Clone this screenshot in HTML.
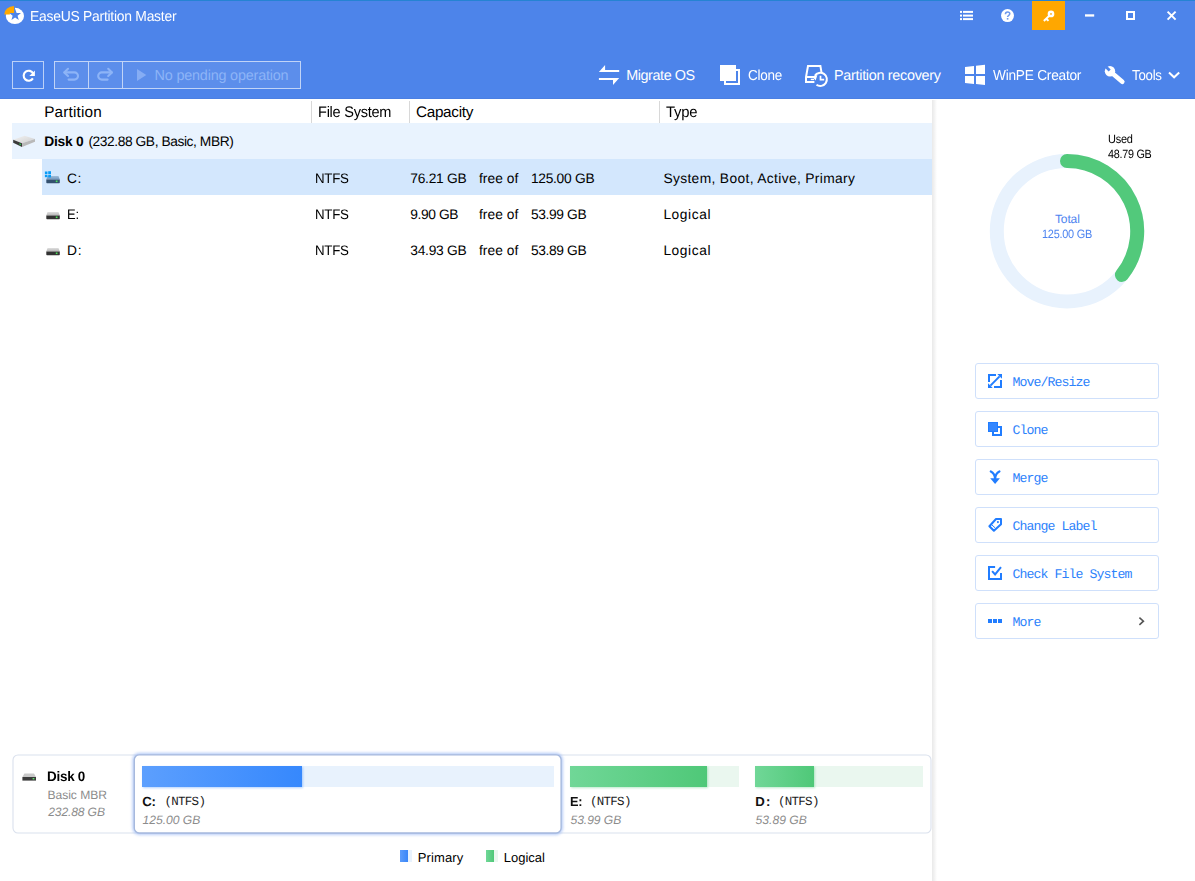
<!DOCTYPE html>
<html lang="en"><head><meta charset="utf-8"><title>EaseUS Partition Master</title>
<style>
*{box-sizing:border-box;margin:0;padding:0}
html,body{width:1195px;height:881px;overflow:hidden;background:#fff}
body{position:relative;font-family:"Liberation Sans",sans-serif;color:#000;text-rendering:geometricPrecision}
.abs,.t,svg{position:absolute}
.t{white-space:pre;display:block}
.m{font-family:"Liberation Mono",monospace}
#titlebar{left:0;top:0;width:1195px;height:99px;background:#4d84ea}
#topline{left:0;top:0;width:1195px;height:1px;background:#2583d3}
#hdrshade{left:0;top:98px;width:1195px;height:1px;background:#4a7fe3}
.tbtn{border:1px solid rgba(255,255,255,.62)}
#grp{background:rgba(255,255,255,.085)}
.sep{width:1px;background:rgba(255,255,255,.62)}
.colsep{width:1px;top:101px;height:22px;background:#d8d8d8}
.row{height:36px}
.abtn{left:975px;width:184px;height:36px;border:1px solid #cfe0fb;border-radius:3px;background:#fff}
</style></head>
<body>
<div id="titlebar" class="abs"></div><div id="topline" class="abs"></div><div id="hdrshade" class="abs"></div>
<svg id="logo" style="left:3px;top:4px" width="24" height="23" viewBox="3 4 24 23">
<ellipse cx="14.9" cy="15.9" rx="9.1" ry="8.1" fill="#fff"/>
<path d="M15.10 8.80 L16.63 12.90 L21.00 13.08 L17.57 15.80 L18.74 20.02 L15.10 17.60 L11.46 20.02 L12.63 15.80 L9.20 13.08 L13.57 12.90 Z" fill="#4d84ea"/>
<path d="M13 5 L15 5 L15 13.6 L13 13.6 Z" fill="#4d84ea"/>
<path d="M4.2 14.5 A9.9 8.6 0 0 1 14.1 5.9 L14.1 12.9 L9.9 12.9 L9.9 14.5 Z" fill="#ffa800"/>
</svg>
<span class="t" style="left:29.5px;top:8px;font-size:14.38px;line-height:19px;letter-spacing:-0.259px;transform:scaleX(0.9658);transform-origin:0 50%;color:#fff;">EaseUS Partition Master</span>
<svg style="left:959px;top:10px" width="16" height="12" viewBox="959 10 16 12" fill="#fff">
<rect x="960" y="10.9" width="2" height="2"/><rect x="963" y="10.9" width="10" height="2"/>
<rect x="960" y="14.6" width="2" height="2"/><rect x="963" y="14.6" width="10" height="2"/>
<rect x="960" y="18.1" width="2" height="2"/><rect x="963" y="18.1" width="10" height="2"/>
</svg>
<svg style="left:1000px;top:8px" width="16" height="16" viewBox="1000 8 16 16">
<circle cx="1007.5" cy="15.6" r="6.5" fill="#fff"/>
<path d="M1005.4 14.2 C1005.4 12.6 1006.4 11.9 1007.6 11.9 C1008.9 11.9 1009.8 12.7 1009.8 13.8 C1009.8 15.2 1007.6 15.4 1007.6 17" fill="none" stroke="#6f99ec" stroke-width="1.5"/>
<rect x="1006.8" y="18" width="1.6" height="1.6" fill="#6f99ec"/>
</svg>
<div class="abs" style="left:1032px;top:1px;width:33px;height:29px;background:#ffa700"></div>
<svg style="left:1040px;top:8px" width="16" height="16" viewBox="1040 8 16 16">
<circle cx="1051" cy="13.9" r="2.1" fill="none" stroke="#fff" stroke-width="2.5"/>
<path d="M1049.4 15.6 L1044.6 20.3 M1046.3 18.7 L1047.8 20.2" fill="none" stroke="#fff" stroke-width="2" stroke-linecap="square"/>
</svg>
<svg style="left:1084px;top:12px" width="12" height="6" viewBox="1084 12 12 6"><rect x="1085" y="14.3" width="9.2" height="2.3" fill="#fff"/></svg>
<div class="abs" style="left:1126px;top:11px;width:9px;height:9px;border:2px solid #fff"></div>
<svg style="left:1165px;top:9px" width="13" height="13" viewBox="1165 9 13 13">
<path d="M1167.6 11.6 L1175.6 19.6 M1175.6 11.6 L1167.6 19.6" stroke="#fff" stroke-width="2" fill="none"/>
</svg>
<div class="abs tbtn" style="left:12px;top:61px;width:32px;height:28px"></div>
<svg style="left:20px;top:68px" width="17" height="16" viewBox="20 68 17 16">
<path d="M33.2 73.6 A5 5 0 1 0 32.9 78.4" fill="none" stroke="#fff" stroke-width="2.1"/>
<path d="M34.9 70.4 L34.9 76 L29.3 76 Z" fill="#fff"/>
</svg>
<div id="grp" class="abs tbtn" style="left:54px;top:61px;width:247px;height:28px"></div>
<div class="abs sep" style="left:88px;top:62px;height:26px"></div>
<div class="abs sep" style="left:122px;top:62px;height:26px"></div>
<svg style="left:62px;top:67px" width="18" height="15" viewBox="62 67 18 15" fill="none" stroke="#8db4f7" stroke-width="2.1" stroke-linecap="round" stroke-linejoin="round">
<path d="M68 68.8 L64.2 72.4 L68 76"/><path d="M64.6 72.4 L74.4 72.4 A3.6 3.6 0 0 1 74.4 79.6 L68.6 79.6"/>
</svg>
<svg style="left:96px;top:67px" width="18" height="15" viewBox="96 67 18 15" fill="none" stroke="#8db4f7" stroke-width="2.1" stroke-linecap="round" stroke-linejoin="round">
<path d="M108.2 68.8 L112 72.4 L108.2 76"/><path d="M111.6 72.4 L101.8 72.4 A3.6 3.6 0 0 0 101.8 79.6 L107.6 79.6"/>
</svg>
<svg style="left:136px;top:68px" width="12" height="14" viewBox="136 68 12 14"><path d="M137 69 L146.3 75 L137 81 Z" fill="#86adf4"/></svg>
<span class="t" style="left:154.6px;top:67px;font-size:14.38px;line-height:19px;letter-spacing:-0.183px;color:#8db4f7;">No pending operation</span>
<svg style="left:598px;top:64px" width="22" height="22" viewBox="598 64 22 22" fill="#fff">
<path d="M598.9 72 L605.1 64.9 L605.1 69.9 L619.2 69.9 L619.2 72 Z"/>
<path d="M619.2 78 L613 85 L613 80.1 L598.9 80.1 L598.9 78 Z"/>
</svg>
<span class="t" style="left:626.2px;top:67px;font-size:14.38px;line-height:19px;letter-spacing:-0.411px;color:#fff;">Migrate OS</span>
<svg style="left:719px;top:64px" width="22" height="22" viewBox="719 64 22 22">
<rect x="720" y="65" width="16" height="16" fill="#fff"/>
<path d="M736 70 L739 70 L739 84 L725 84 L725 81" fill="none" stroke="#fff" stroke-width="2"/>
</svg>
<span class="t" style="left:747.7px;top:67px;font-size:14.38px;line-height:19px;letter-spacing:-0.266px;transform:scaleX(0.9398);transform-origin:0 50%;color:#fff;">Clone</span>
<svg style="left:804px;top:64px" width="26" height="24" viewBox="804 64 26 24" fill="none" stroke="#fff" stroke-width="1.8">
<path d="M814.4 82 L806 82 L806 77 L808 66.1 L820.4 66.1 L821.5 72.4" stroke-width="2"/>
<path d="M806 77 L815 77" stroke-width="2"/>
<path d="M810.8 79.4 L814 79.4" stroke-width="1.4"/>
<path d="M814.8 75.7 A6.6 6.6 0 1 1 816.5 84.8" stroke-width="2"/>
<path d="M820.5 75.8 L820.5 79.7 L824.2 79.7" stroke-width="1.7"/>
<path d="M812.6 76.8 L817.4 75 L815.6 80.4 Z" fill="#fff" stroke="none"/>
</svg>
<span class="t" style="left:834.0px;top:67px;font-size:14.38px;line-height:19px;letter-spacing:-0.286px;color:#fff;">Partition recovery</span>
<svg style="left:964px;top:64px" width="22" height="22" viewBox="964 64 22 22" fill="#fff">
<path d="M965 67.1 L974 65.9 L974 74 L965 74 Z"/>
<path d="M976 65.8 L985 64.8 L985 74 L976 74 Z"/>
<path d="M965 76 L974 76 L974 84 L965 82.9 Z"/>
<path d="M976 76 L985 76 L985 85.1 L976 84.1 Z"/>
</svg>
<span class="t" style="left:992.6px;top:67px;font-size:14.38px;line-height:19px;letter-spacing:-0.262px;transform:scaleX(0.9535);transform-origin:0 50%;color:#fff;">WinPE Creator</span>
<svg style="left:1103px;top:64px" width="24" height="22" viewBox="1103 64 24 22">
<path d="M1112 73 L1122.3 81.7" stroke="#fff" stroke-width="4.6" stroke-linecap="round" fill="none"/>
<circle cx="1110" cy="71.2" r="5.2" fill="#fff"/>
<path d="M1109.7 70.6 L1104 64.9" stroke="#4d84ea" stroke-width="2.8" fill="none"/>
</svg>
<span class="t" style="left:1131.8px;top:67px;font-size:14.38px;line-height:19px;letter-spacing:-0.271px;transform:scaleX(0.9236);transform-origin:0 50%;color:#fff;">Tools</span>
<svg style="left:1167px;top:71px" width="14" height="10" viewBox="1167 71 14 10"><path d="M1169 72.6 L1174.1 77.3 L1179.2 72.6" fill="none" stroke="#fff" stroke-width="2"/></svg>
<div class="abs colsep" style="left:311px"></div><div class="abs colsep" style="left:409px"></div><div class="abs colsep" style="left:659px"></div>
<span class="t" style="left:44.2px;top:103px;font-size:15.32px;line-height:20px;letter-spacing:0.177px;">Partition</span>
<span class="t" style="left:318.2px;top:103px;font-size:15.32px;line-height:20px;letter-spacing:-0.263px;transform:scaleX(0.9489);transform-origin:0 50%;">File System</span>
<span class="t" style="left:416.0px;top:103px;font-size:15.32px;line-height:20px;letter-spacing:-0.325px;">Capacity</span>
<span class="t" style="left:666.3px;top:103px;font-size:15.32px;line-height:20px;letter-spacing:-0.258px;transform:scaleX(0.9683);transform-origin:0 50%;">Type</span>
<div class="abs row" style="left:12px;top:123px;width:920px;background:#e9f3fe"></div>
<div class="abs row" style="left:42px;top:159px;width:890px;background:#d3e7fd"></div>
<svg style="left:12px;top:133px" width="26" height="16" viewBox="12 133 26 16">
<defs><linearGradient id="dtop" x1="0" y1="0" x2="1" y2="1"><stop offset="0" stop-color="#f2f2f2"/><stop offset="1" stop-color="#cfcfcf"/></linearGradient></defs>
<path d="M13.2 139.8 L24.6 135.8 L35 139 L22 143.3 Z" fill="url(#dtop)"/>
<path d="M13.2 139.8 L22 143.3 L22 146.9 L13.2 142.8 Z" fill="#3a3a3a"/>
<path d="M22 143.3 L35 139 L35 141.8 L22 146.9 Z" fill="#b9b9b9"/>
<path d="M19.4 143.3 L21 143.9 L21 145.3 L19.4 144.7 Z" fill="#2fc24c"/>
</svg>
<span class="t" style="left:44.2px;top:133px;font-size:13.79px;line-height:18px;letter-spacing:-0.202px;font-weight:700;">Disk 0</span>
<span class="t" style="left:88.4px;top:133px;font-size:13.79px;line-height:18px;letter-spacing:-0.424px;">(232.88 GB, Basic, MBR)</span>
<span class="t" style="left:67.0px;top:170px;font-size:13.79px;line-height:18px;letter-spacing:0.519px;">C:</span>
<span class="t" style="left:314.7px;top:170px;font-size:13.79px;line-height:18px;letter-spacing:-0.259px;transform:scaleX(0.9657);transform-origin:0 50%;">NTFS</span>
<span class="t" style="left:410.3px;top:170px;font-size:13.79px;line-height:18px;letter-spacing:-0.276px;">76.21 GB</span>
<span class="t" style="left:478.9px;top:170px;font-size:13.79px;line-height:18px;letter-spacing:0.054px;">free of</span>
<span class="t" style="left:530.9px;top:170px;font-size:13.79px;line-height:18px;letter-spacing:-0.276px;">125.00 GB</span>
<span class="t" style="left:663.4px;top:170px;font-size:13.79px;line-height:18px;letter-spacing:0.357px;">System, Boot, Active, Primary</span>
<svg style="left:44px;top:171px" width="17" height="14" viewBox="0 0 17 14">
<defs><linearGradient id="pt0" x1="0" y1="0" x2="0" y2="1"><stop offset="0" stop-color="#9dbbd8"/><stop offset="1" stop-color="#6f95be"/></linearGradient></defs>
<path d="M2.3 8.5 L3.5 5.1 L14.5 5.1 L15.8 8.5 Z" fill="url(#pt0)"/>
<path d="M2.3 8.5 L15.8 8.5 L15.8 11.5 Q15.8 12.2 15.1 12.2 L3 12.2 Q2.3 12.2 2.3 11.5 Z" fill="#34516f"/><rect x="11.8" y="9.5" width="1.7" height="1.6" fill="#4be35a"/>
<rect x="0.9" y="0.5" width="2.6" height="2.5" fill="#0a9bf5"/><rect x="4.2" y="0.2" width="2.8" height="2.8" fill="#0a9bf5"/><rect x="0.9" y="3.7" width="2.6" height="2.5" fill="#0a9bf5"/><rect x="4.2" y="3.7" width="2.8" height="2.8" fill="#0a9bf5"/></svg>
<span class="t" style="left:67.0px;top:206px;font-size:13.79px;line-height:18px;letter-spacing:-0.266px;transform:scaleX(0.9400);transform-origin:0 50%;">E:</span>
<span class="t" style="left:314.7px;top:206px;font-size:13.79px;line-height:18px;letter-spacing:-0.259px;transform:scaleX(0.9657);transform-origin:0 50%;">NTFS</span>
<span class="t" style="left:410.3px;top:206px;font-size:13.79px;line-height:18px;letter-spacing:-0.396px;">9.90 GB</span>
<span class="t" style="left:478.9px;top:206px;font-size:13.79px;line-height:18px;letter-spacing:0.054px;">free of</span>
<span class="t" style="left:530.9px;top:206px;font-size:13.79px;line-height:18px;letter-spacing:-0.362px;">53.99 GB</span>
<span class="t" style="left:663.4px;top:206px;font-size:13.79px;line-height:18px;letter-spacing:0.569px;">Logical</span>
<svg style="left:44px;top:207px" width="17" height="14" viewBox="0 0 17 14">
<defs><linearGradient id="pt1" x1="0" y1="0" x2="0" y2="1"><stop offset="0" stop-color="#dedede"/><stop offset="1" stop-color="#b4b4b4"/></linearGradient></defs>
<path d="M2.3 8.5 L3.5 5.1 L14.5 5.1 L15.8 8.5 Z" fill="url(#pt1)"/>
<path d="M2.3 8.5 L15.8 8.5 L15.8 11.5 Q15.8 12.2 15.1 12.2 L3 12.2 Q2.3 12.2 2.3 11.5 Z" fill="#333"/><rect x="11.8" y="9.5" width="1.7" height="1.6" fill="#4be35a"/>
</svg>
<span class="t" style="left:67.0px;top:242px;font-size:13.79px;line-height:18px;letter-spacing:0.719px;">D:</span>
<span class="t" style="left:314.7px;top:242px;font-size:13.79px;line-height:18px;letter-spacing:-0.259px;transform:scaleX(0.9657);transform-origin:0 50%;">NTFS</span>
<span class="t" style="left:410.3px;top:242px;font-size:13.79px;line-height:18px;letter-spacing:-0.276px;">34.93 GB</span>
<span class="t" style="left:478.9px;top:242px;font-size:13.79px;line-height:18px;letter-spacing:0.054px;">free of</span>
<span class="t" style="left:530.9px;top:242px;font-size:13.79px;line-height:18px;letter-spacing:-0.362px;">53.89 GB</span>
<span class="t" style="left:663.4px;top:242px;font-size:13.79px;line-height:18px;letter-spacing:0.569px;">Logical</span>
<svg style="left:44px;top:243px" width="17" height="14" viewBox="0 0 17 14">
<defs><linearGradient id="pt2" x1="0" y1="0" x2="0" y2="1"><stop offset="0" stop-color="#dedede"/><stop offset="1" stop-color="#b4b4b4"/></linearGradient></defs>
<path d="M2.3 8.5 L3.5 5.1 L14.5 5.1 L15.8 8.5 Z" fill="url(#pt2)"/>
<path d="M2.3 8.5 L15.8 8.5 L15.8 11.5 Q15.8 12.2 15.1 12.2 L3 12.2 Q2.3 12.2 2.3 11.5 Z" fill="#333"/><rect x="11.8" y="9.5" width="1.7" height="1.6" fill="#4be35a"/>
</svg>
<div class="abs" style="left:932px;top:100px;width:5px;height:781px;background:linear-gradient(90deg,#e9e9e9,#f1f1f1 40%,#fff)"></div>
<svg style="left:980px;top:145px" width="175" height="175" viewBox="980 145 175 175" fill="none">
<circle cx="1067" cy="231.2" r="70.2" stroke="#e8f2fd" stroke-width="14"/>
<path d="M1067 161.0 A70.2 70.2 0 0 1 1121.94 274.90" stroke="#52c97b" stroke-width="14" stroke-linecap="round"/>
</svg>
<span class="t" style="left:1107.6px;top:131px;font-size:12.02px;line-height:16px;letter-spacing:-0.274px;transform:scaleX(0.9140);transform-origin:0 50%;">Used</span>
<span class="t" style="left:1107.6px;top:146px;font-size:12.02px;line-height:16px;letter-spacing:-0.279px;transform:scaleX(0.8970);transform-origin:0 50%;">48.79 GB</span>
<span class="t" style="left:1054.9px;top:211px;font-size:12.02px;line-height:16px;letter-spacing:-0.098px;color:#4d84f0;">Total</span>
<span class="t" style="left:1041.7px;top:226px;font-size:12.02px;line-height:16px;letter-spacing:-0.275px;transform:scaleX(0.9086);transform-origin:0 50%;color:#4d84f0;">125.00 GB</span>
<div class="abs abtn" style="top:363px"></div>
<svg style="left:988px;top:374px" width="14" height="14" viewBox="0 0 14 14"><path d="M8 1 L1 1 L1 8" fill="none" stroke="#217dff" stroke-width="2"/><path d="M6 13 L13 13 L13 6" fill="none" stroke="#217dff" stroke-width="2"/><path d="M2.4 11.6 L11.6 2.4" stroke="#217dff" stroke-width="2"/><path d="M9.3 0 L14 0 L14 4.7 Z" fill="#217dff"/><path d="M0 9.3 L0 14 L4.7 14 Z" fill="#217dff"/></svg>
<span class="t m" style="left:1012.6px;top:374px;font-size:13.2px;line-height:17px;letter-spacing:-0.914px;color:#2d82fb;">Move/Resize</span>
<div class="abs abtn" style="top:411px"></div>
<svg style="left:988px;top:422px" width="14" height="14" viewBox="0 0 14 14"><rect x="0" y="0" width="10" height="10" fill="#3487ff"/><rect x="0.5" y="0.5" width="9" height="9" fill="none" stroke="#217dff" stroke-width="1"/><path d="M10 5 L13 5 L13 13 L5 13 L5 10" fill="none" stroke="#217dff" stroke-width="2"/></svg>
<span class="t m" style="left:1012.6px;top:422px;font-size:13.2px;line-height:17px;letter-spacing:-0.915px;color:#2d82fb;">Clone</span>
<div class="abs abtn" style="top:459px"></div>
<svg style="left:988px;top:470px" width="14" height="14" viewBox="0 0 14 14"><path d="M2.8 1.4 Q6.6 3.2 7.1 8.6 M11.4 1.4 Q7.6 3.2 7.1 8.6" fill="none" stroke="#217dff" stroke-width="2.2" stroke-linecap="round"/><path d="M2.2 8.3 L11.9 8.3 L7.1 13.9 Z" fill="#217dff"/></svg>
<span class="t m" style="left:1012.6px;top:470px;font-size:13.2px;line-height:17px;letter-spacing:-0.915px;color:#2d82fb;">Merge</span>
<div class="abs abtn" style="top:507px"></div>
<svg style="left:988px;top:518px" width="14" height="14" viewBox="0 0 14 14"><path d="M8 1 L13 1 L13 6.2 L5.9 12.8 L1.4 8.2 Z" fill="none" stroke="#217dff" stroke-width="2" stroke-linejoin="round"/><path d="M4 7.1 L7.1 9.8" stroke="#217dff" stroke-width="1"/><circle cx="9.9" cy="4.1" r="1.05" fill="#217dff"/></svg>
<span class="t m" style="left:1012.6px;top:518px;font-size:13.2px;line-height:17px;letter-spacing:-0.914px;color:#2d82fb;">Change Label</span>
<div class="abs abtn" style="top:555px"></div>
<svg style="left:988px;top:566px" width="14" height="14" viewBox="0 0 14 14"><path d="M7.1 1 L1 1 L1 13 L13 13 L13 7.1" fill="none" stroke="#217dff" stroke-width="2"/><path d="M4.1 5.1 L7.1 8.5 L13 1.2" fill="none" stroke="#217dff" stroke-width="2"/></svg>
<span class="t m" style="left:1012.6px;top:566px;font-size:13.2px;line-height:17px;letter-spacing:-0.914px;color:#2d82fb;">Check File System</span>
<div class="abs abtn" style="top:603px"></div>
<svg style="left:988px;top:614px" width="14" height="14" viewBox="0 0 14 14"><rect x="0" y="5" width="4" height="4" fill="#217dff"/><rect x="5" y="5" width="4" height="4" fill="#217dff"/><rect x="10" y="5" width="4" height="4" fill="#217dff"/></svg>
<span class="t m" style="left:1012.6px;top:614px;font-size:13.2px;line-height:17px;letter-spacing:-0.912px;color:#2d82fb;">More</span>
<svg style="left:1137px;top:616px" width="9" height="11" viewBox="1137 616 9 11"><path d="M1139.4 617.6 L1143.4 621.2 L1139.4 624.8" fill="none" stroke="#555" stroke-width="1.6"/></svg>
<svg id="mapframe" style="left:0;top:740px" width="945" height="110" viewBox="0 740 945 110" fill="none">
<defs><filter id="glow" x="-5%" y="-20%" width="110%" height="140%"><feGaussianBlur stdDeviation="1.7"/></filter></defs>
<rect x="13" y="755" width="918" height="78" rx="5" stroke="#dae1ed" stroke-width="1.1" fill="#fff"/>
<rect x="134.3" y="754.8" width="426.8" height="78.2" rx="5" stroke="#7fa6f2" stroke-width="3.4" filter="url(#glow)" opacity=".62"/>
<rect x="134.3" y="754.8" width="426.8" height="78.2" rx="5" stroke="#a5b8dd" stroke-width="1.35" fill="#fff"/>
</svg>
<svg style="left:22px;top:772px" width="15" height="10" viewBox="0 0 15 10">
<path d="M0.4 5 L2.4 1.6 L12 1.6 L14 5 Z" fill="#c9c9c9"/><rect x="0.4" y="5" width="13.6" height="3.6" fill="#3c3c3c"/><rect x="10.6" y="6" width="1.8" height="1.4" fill="#5fe36b"/>
</svg>
<span class="t" style="left:47.4px;top:768px;font-size:13.79px;line-height:18px;letter-spacing:-0.257px;transform:scaleX(0.9739);transform-origin:0 50%;font-weight:700;">Disk 0</span>
<span class="t" style="left:47.4px;top:787px;font-size:12.12px;line-height:16px;letter-spacing:-0.036px;color:#8c8c8c;">Basic MBR</span>
<span class="t" style="left:48.2px;top:804px;font-size:12.12px;line-height:16px;letter-spacing:-0.138px;color:#8c8c8c;font-style:italic;">232.88 GB</span>
<div class="abs" style="left:142px;top:766px;width:412px;height:21px;background:#e8f2fd"></div>
<div class="abs" style="left:142px;top:766px;width:160px;height:21px;background:linear-gradient(90deg,#5c9ffe,#3688fd);box-shadow:1px 1px 2px rgba(54,136,253,.38)"></div>
<span class="t" style="left:142.3px;top:793px;font-size:13.2px;line-height:17px;letter-spacing:-0.322px;color:#111;font-weight:700;">C:</span>
<span class="t m" style="left:164.5px;top:794px;font-size:12.5px;line-height:16px;letter-spacing:-0.723px;color:#1c1c1c;">(NTFS)</span>
<span class="t" style="left:142.5px;top:812px;font-size:12.12px;line-height:16px;letter-spacing:-0.013px;color:#8c8c8c;font-style:italic;">125.00 GB</span>
<div class="abs" style="left:570px;top:766px;width:169px;height:21px;background:#eaf7ef"></div>
<div class="abs" style="left:570px;top:766px;width:137px;height:21px;background:linear-gradient(90deg,#70d797,#4fc878);box-shadow:1px 1px 2px rgba(79,200,120,.38)"></div>
<span class="t" style="left:570.3px;top:793px;font-size:13.2px;line-height:17px;letter-spacing:-0.259px;transform:scaleX(0.9668);transform-origin:0 50%;color:#111;font-weight:700;">E:</span>
<span class="t m" style="left:590.0px;top:794px;font-size:12.5px;line-height:16px;letter-spacing:-0.723px;color:#1c1c1c;">(NTFS)</span>
<span class="t" style="left:570.5px;top:812px;font-size:12.12px;line-height:16px;letter-spacing:-0.053px;color:#8c8c8c;font-style:italic;">53.99 GB</span>
<div class="abs" style="left:755px;top:766px;width:168px;height:21px;background:#eaf7ef"></div>
<div class="abs" style="left:755px;top:766px;width:59px;height:21px;background:linear-gradient(90deg,#70d797,#4fc878);box-shadow:1px 1px 2px rgba(79,200,120,.38)"></div>
<span class="t" style="left:755.3px;top:793px;font-size:13.2px;line-height:17px;letter-spacing:1.078px;color:#111;font-weight:700;">D:</span>
<span class="t m" style="left:778.0px;top:794px;font-size:12.5px;line-height:16px;letter-spacing:-0.723px;color:#1c1c1c;">(NTFS)</span>
<span class="t" style="left:755.5px;top:812px;font-size:12.12px;line-height:16px;letter-spacing:0.018px;color:#8c8c8c;font-style:italic;">53.89 GB</span>
<div class="abs" style="left:400px;top:850px;width:12px;height:12px;background:linear-gradient(90deg,#5c9cfb,#3a86f8 66%,#e8f2fd 66%)"></div>
<span class="t" style="left:417.7px;top:849px;font-size:13.0px;line-height:17px;letter-spacing:0.120px;">Primary</span>
<div class="abs" style="left:486px;top:850px;width:12px;height:12px;background:linear-gradient(90deg,#70d797,#4fc878 66%,#eaf7ef 66%)"></div>
<span class="t" style="left:503.8px;top:849px;font-size:13.0px;line-height:17px;letter-spacing:-0.017px;">Logical</span>
</body></html>
